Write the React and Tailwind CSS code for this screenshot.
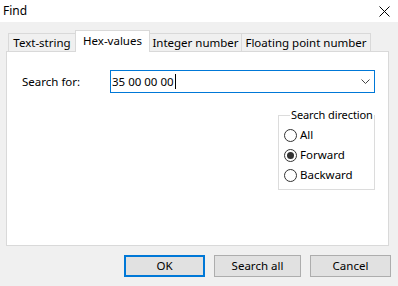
import React, { useState } from 'react';

const font = { fontFamily: '"Segoe UI", "Noto Sans", "Liberation Sans", sans-serif' };

function Radio({ label, checked, onClick }) {
    return (
        <div className="flex items-center h-[20px] cursor-default whitespace-nowrap" onClick={onClick}>
            <span className="w-[13px] h-[13px] rounded-full border border-[#333333] bg-white flex items-center justify-center shrink-0">
                {checked && <span className="w-[7px] h-[7px] rounded-full bg-[#333333]"></span>}
            </span>
            <span className="ml-[3px]">{label}</span>
        </div>
    );
}

function App() {
    const [tab, setTab] = useState(1);
    const [direction, setDirection] = useState('Forward');

    const tabs = [
        { label: 'Text-string', w: 'w-[68px]' },
        { label: 'Hex-values', w: 'w-[75px]' },
        { label: 'Integer number', w: 'w-[93px]' },
        { label: 'Floating point number', w: 'w-[130px]' },
    ];

    return (
        <div className="w-[398px] h-[286px] bg-[#f0f0f0] flex flex-col text-[11.5px] text-black overflow-hidden whitespace-nowrap" style={font}>
            {/* Title bar */}
            <div className="h-[22px] bg-white flex items-center justify-between pl-[3px] pr-[8px]">
                <span className="text-[12px]">Find</span>
                <svg width="11" height="11" viewBox="0 0 11 11" className="mt-[1px]">
                    <path d="M0.5 0.5 L10.5 10.5 M10.5 0.5 L0.5 10.5" stroke="#000" strokeWidth="1" />
                </svg>
            </div>

            <div className="pl-[6px] pr-[9px] pt-[8px]">
                {/* Tabs */}
                <div className="flex items-end h-[21px] pl-[2px] relative z-10">
                    {tabs.map((t, i) =>
                        i === tab ? (
                            <div
                                key={t.label}
                                onClick={() => setTab(i)}
                                className={`${t.w} h-[22px] -mb-px bg-white border border-b-0 border-[#d9d9d9] flex items-center justify-center pb-[2px] -ml-px relative`}
                            >
                                {t.label}
                            </div>
                        ) : (
                            <div
                                key={t.label}
                                onClick={() => setTab(i)}
                                className={`${t.w} h-[18px] bg-[#f0f0f0] border border-b-0 border-[#d9d9d9] flex items-center justify-center pt-[1px] -ml-px first:ml-0`}
                            >
                                {t.label}
                            </div>
                        )
                    )}
                </div>

                {/* Panel */}
                <div className="h-[195px] bg-white border border-[#d9d9d9] pt-[18px] pl-[15px] pr-[13px]">
                    <div className="flex items-center">
                        <label className="w-[88px]">Search for:</label>
                        <div className="w-[265px] h-[23px] border border-[#0078d7] flex items-center justify-between pl-[1px] pr-[4px]">
                            <span className="flex items-center">
                                35 00 00 00<span className="w-px h-[15px] bg-black ml-[1px]"></span>
                            </span>
                            <svg width="9" height="5" viewBox="0 0 9 5">
                                <path d="M0.5 0.5 L4.5 4.5 L8.5 0.5" stroke="#444" fill="none" strokeWidth="1" />
                            </svg>
                        </div>
                    </div>

                    <div className="flex justify-end mt-[15px]">
                        <fieldset className="w-[97px] min-w-0 h-[82px] border border-[#dcdcdc] pl-[5px]">
                            <legend className="ml-[6px] px-[1px] leading-[14px] text-[11px] tracking-[-0.1px]">Search direction</legend>
                            <div className="pt-[3px]">
                                {['All', 'Forward', 'Backward'].map((d) => (
                                    <Radio key={d} label={d} checked={direction === d} onClick={() => setDirection(d)} />
                                ))}
                            </div>
                        </fieldset>
                    </div>
                </div>

                {/* Buttons */}
                <div className="flex justify-end gap-[9px] mt-[9px]">
                    <button className="w-[81px] h-[22px] bg-[#e1e1e1] border-2 border-[#0078d7] flex items-center justify-center">
                        OK
                    </button>
                    <button className="w-[87px] h-[22px] bg-[#e1e1e1] border border-[#adadad] flex items-center justify-center">
                        Search all
                    </button>
                    <button className="w-[81px] h-[22px] bg-[#e1e1e1] border border-[#adadad] flex items-center justify-center -mr-[2px]">
                        Cancel
                    </button>
                </div>
            </div>
        </div>
    );
}

export default App;
